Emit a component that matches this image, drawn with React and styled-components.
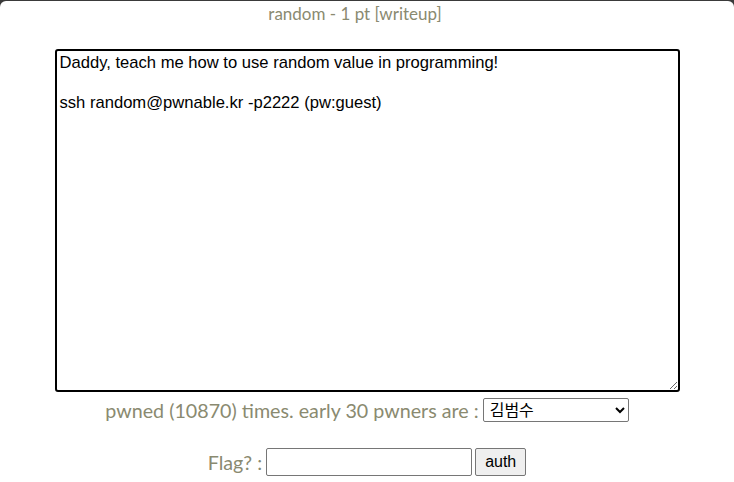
import React, { useState } from 'react'
import styled, { createGlobalStyle } from 'styled-components'

const GlobalStyle = createGlobalStyle`
  html, body {
    margin: 0;
    padding: 0;
    background-color: #3a3a3a;
    height: 100%;
    overflow: hidden;
  }
  #root {
    height: 100%;
  }
`

const Window = styled.main`
  margin-top: 1px;
  height: calc(100% - 1px);
  background-color: #ffffff;
  border-radius: 6px 6px 0 0;
  display: flex;
  flex-direction: column;
  align-items: center;
  font-family: Lato, 'Noto Sans', sans-serif;
  color: #8a8a70;
`

const Title = styled.h1`
  margin: 2px 24px 0 0;
  font-size: 17px;
  font-weight: 400;
  line-height: 22px;
  color: #8a8a70;
`

const Description = styled.textarea`
  box-sizing: border-box;
  margin-top: 24px;
  width: 625px;
  height: 343px;
  padding: 2px 3px;
  border: 2px solid #000000;
  border-radius: 3px;
  font-family: Arial, 'Liberation Sans', sans-serif;
  font-size: 16.6px;
  line-height: 20px;
  color: #000000;
  outline: none;
`

const Row = styled.div`
  display: flex;
  align-items: center;
  gap: 4px;
  margin-top: ${(p) => p.$top}px;
  font-size: 19.7px;
`

const Select = styled.select`
  box-sizing: border-box;
  width: 146px;
  height: 24px;
  font-family: Arial, 'Liberation Sans', 'Noto Sans CJK KR', sans-serif;
  font-size: 16px;
  color: #000000;
  border: 1px solid #767676;
  border-radius: 2px;
  background: #ffffff;
  padding: 0 2px;
`

const FlagInput = styled.input`
  box-sizing: border-box;
  width: 206px;
  height: 28px;
  border: 1px solid #767676;
  border-radius: 2px;
  font-size: 16px;
`

const AuthButton = styled.button`
  box-sizing: border-box;
  height: 28px;
  padding: 0 9px;
  margin-left: -1px;
  font-family: Arial, 'Liberation Sans', sans-serif;
  font-size: 16px;
  color: #000000;
  background-color: #efefef;
  border: 1px solid #767676;
  border-radius: 2px;
`

const text = `Daddy, teach me how to use random value in programming!

ssh random@pwnable.kr -p2222 (pw:guest)
`

export default function App() {
  const [flag, setFlag] = useState('')
  return (
    <>
      <GlobalStyle />
      <Window>
        <Title>random - 1 pt [writeup]</Title>
        <Description defaultValue={text} readOnly />
        <Row $top={6}>
          <span>pwned (10870) times. early 30 pwners are :</span>
          <Select defaultValue="kim">
            <option value="kim">김범수</option>
          </Select>
        </Row>
        <Row $top={26}>
          <span>Flag? :</span>
          <FlagInput value={flag} onChange={(e) => setFlag(e.target.value)} />
          <AuthButton>auth</AuthButton>
        </Row>
      </Window>
    </>
  )
}
